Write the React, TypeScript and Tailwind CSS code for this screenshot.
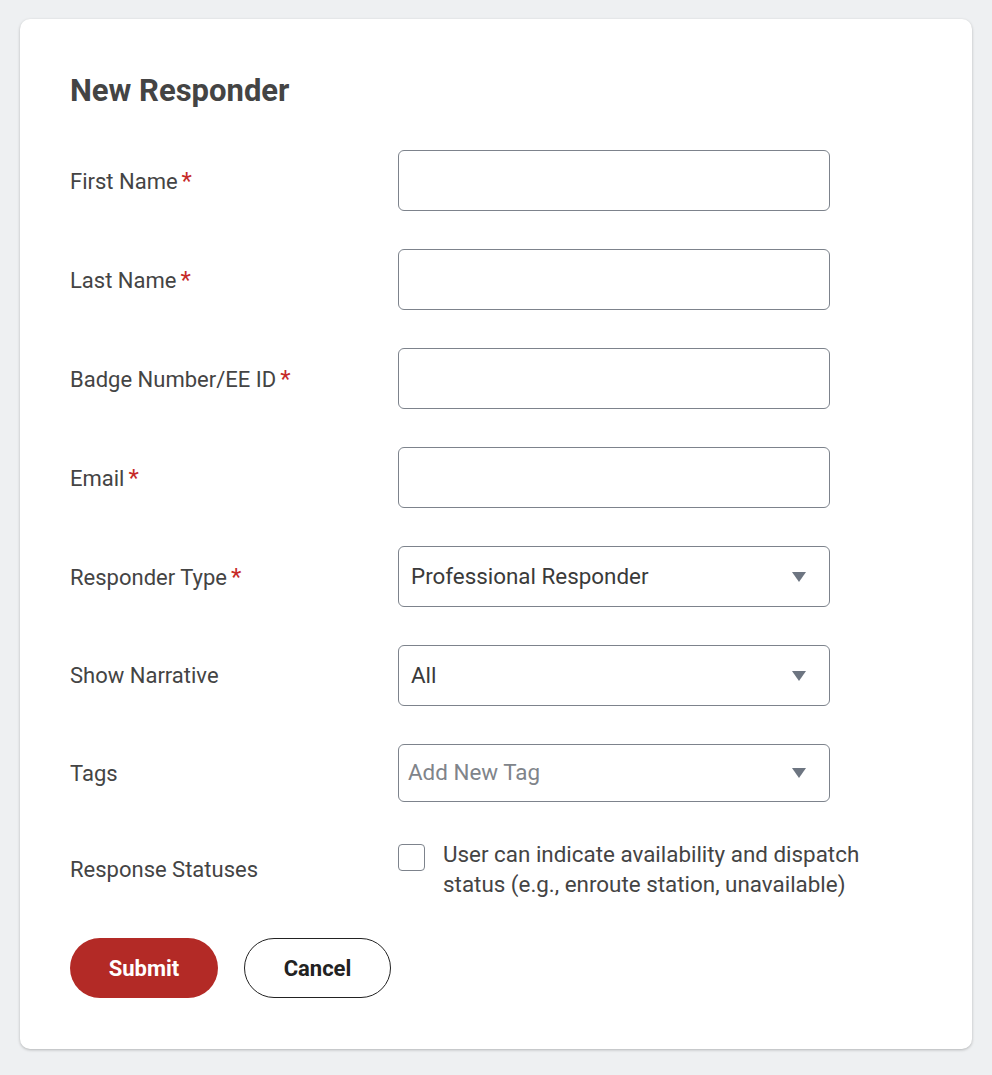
const font = { fontFamily: 'Roboto, "Liberation Sans", sans-serif' }

function Label({ text, required }: { text: string; required?: boolean }) {
  return (
    <div className="w-[328px] shrink-0 text-[22px] text-[#444]">
      {text}
      {required && <span className="ml-[4px] text-[24px] text-[#c62a28]">*</span>}
    </div>
  )
}

function Caret() {
  return (
    <svg width="14" height="10" viewBox="0 0 14 10" className="shrink-0">
      <path d="M0 0 H14 L7 10 Z" fill="#6d7581" />
    </svg>
  )
}

function TextRow({ label, required }: { label: string; required?: boolean }) {
  return (
    <div className="flex items-center">
      <Label text={label} required={required} />
      <div className="h-[61px] w-[432px] rounded-[6px] border-[1.5px] border-[#7d838c] bg-white" />
    </div>
  )
}

function SelectRow({ label, value, placeholder, required, tall = true }: { label: string; value: string; placeholder?: boolean; required?: boolean; tall?: boolean }) {
  return (
    <div className="flex items-center">
      <Label text={label} required={required} />
      <div className={`${tall ? 'h-[61px] pl-[12px]' : 'h-[58px] pl-[9px]'} flex w-[432px] items-center justify-between rounded-[6px] border-[1.5px] border-[#7d838c] bg-white pr-[23px]`}>
        <span className={placeholder ? 'text-[22.4px] text-[#80848a]' : 'text-[22.4px] text-[#3a3a3a]'}>{value}</span>
        <Caret />
      </div>
    </div>
  )
}

export default function App() {
  return (
    <div className="min-h-[1075px] bg-[#eef0f2] px-[20px] pt-[19px]" style={font}>
      <div className="flex w-[952px] flex-col rounded-[10px] bg-white px-[50px] pb-[51px] pt-[53px] shadow-[0_1px_3px_rgba(0,0,0,0.25)]">
        <h1 className="text-[31px] font-bold leading-[38px] text-[#444]">New Responder</h1>

        <div className="mt-[40px] flex flex-col gap-[38px]">
          <TextRow label="First Name" required />
          <TextRow label="Last Name" required />
          <TextRow label="Badge Number/EE ID" required />
          <TextRow label="Email" required />
          <SelectRow label="Responder Type" value="Professional Responder" required />
          <SelectRow label="Show Narrative" value="All" />
          <SelectRow label="Tags" value="Add New Tag" placeholder tall={false} />
        </div>

        <div className="mt-[37px] flex items-center">
          <Label text="Response Statuses" />
          <div className="flex items-start gap-[18px]">
            <div className="mt-[5px] h-[27px] w-[27px] shrink-0 rounded-[4px] border-[1.5px] border-[#7d838c] bg-white" />
            <p className="whitespace-nowrap text-[22.4px] leading-[30px] text-[#444]">
              User can indicate availability and dispatch
              <br />
              status (e.g., enroute station, unavailable)
            </p>
          </div>
        </div>

        <div className="mt-[39px] flex gap-[26px]">
          <button className="h-[60px] w-[148px] rounded-full bg-[#b32a26] text-[22px] font-bold text-white">Submit</button>
          <button className="h-[60px] w-[147px] rounded-full border-[1.5px] border-[#222] bg-white text-[22px] font-bold text-[#222]">Cancel</button>
        </div>
      </div>
    </div>
  )
}
